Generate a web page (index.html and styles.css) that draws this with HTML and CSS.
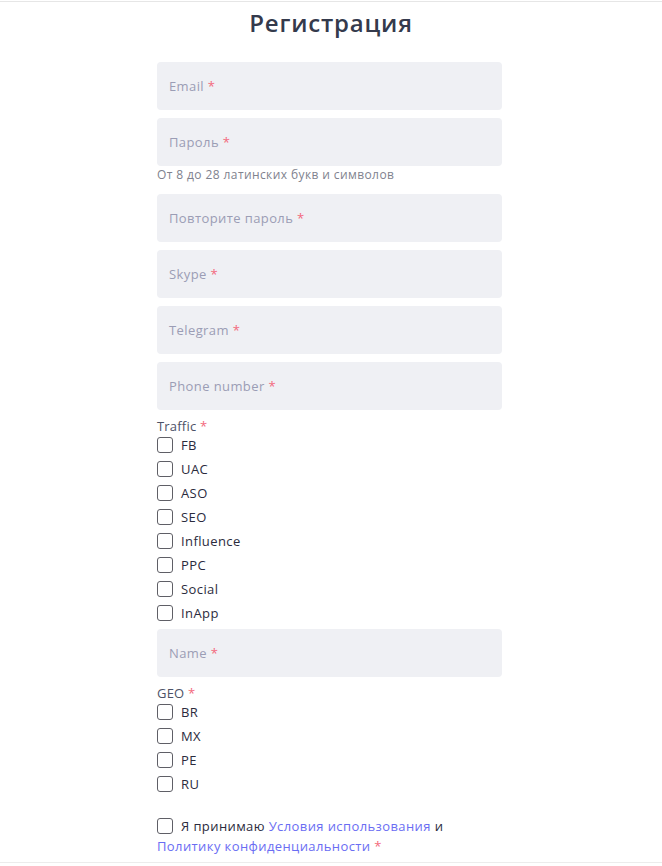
FILE: index.html
```html
<!DOCTYPE html>
<html lang="ru">
<head>
<meta charset="utf-8">
<title>Регистрация</title>
<link rel="stylesheet" href="styles.css">
</head>
<body>
<div class="page">
  <h1 class="title">Регистрация</h1>
  <form class="form">
    <div class="field"><span class="ph">Email <span class="req">*</span></span></div>
    <div class="field"><span class="ph">Пароль <span class="req">*</span></span></div>
    <div class="hint">От 8 до 28 латинских букв и символов</div>
    <div class="field mt"><span class="ph">Повторите пароль <span class="req">*</span></span></div>
    <div class="field"><span class="ph">Skype <span class="req">*</span></span></div>
    <div class="field"><span class="ph">Telegram <span class="req">*</span></span></div>
    <div class="field"><span class="ph">Phone number <span class="req">*</span></span></div>
    <div class="group">
      <div class="glabel">Traffic <span class="req">*</span></div>
      <label class="check"><span class="box"></span>FB</label>
      <label class="check"><span class="box"></span>UAC</label>
      <label class="check"><span class="box"></span>ASO</label>
      <label class="check"><span class="box"></span>SEO</label>
      <label class="check"><span class="box"></span>Influence</label>
      <label class="check"><span class="box"></span>PPC</label>
      <label class="check"><span class="box"></span>Social</label>
      <label class="check"><span class="box"></span>InApp</label>
    </div>
    <div class="field"><span class="ph">Name <span class="req">*</span></span></div>
    <div class="group">
      <div class="glabel">GEO <span class="req">*</span></div>
      <label class="check"><span class="box"></span>BR</label>
      <label class="check"><span class="box"></span>MX</label>
      <label class="check"><span class="box"></span>PE</label>
      <label class="check"><span class="box"></span>RU</label>
    </div>
    <div class="agree">
      <span class="box"></span>Я принимаю <a class="link">Условия использования</a> и<br>
      <a class="link">Политику конфиденциальности</a> <span class="req">*</span>
    </div>
  </form>
</div>
</body>
</html>
```
FILE: styles.css
```css
html, body {
  margin: 0;
  padding: 0;
  background: #fff;
}
body {
  font-family: "Open Sans", "Noto Sans", sans-serif;
  color: #2b2b3d;
}
.page {
  margin-top: 1px;
  border-top: 1px solid #e6e6e6;
  border-bottom: 1px solid #ececec;
  height: 862px;
  box-sizing: border-box;
}
.title {
  margin: 0;
  padding-top: 5px;
  height: 60px;
  box-sizing: border-box;
  text-align: center;
  font-size: 24px;
  font-weight: 600;
  line-height: 32px;
  color: #343a4c;
  letter-spacing: 0.8px;
}
.form {
  margin-left: 157px;
  width: 345px;
  display: flex;
  flex-direction: column;
}
.field {
  height: 48px;
  border-radius: 4px;
  background: #eff0f4;
  display: flex;
  align-items: center;
  padding-left: 12px;
  margin-bottom: 8px;
}
.ph {
  font-size: 13px;
  color: #9b9db5;
  letter-spacing: 0.4px;
}
.req {
  color: #f3697c;
}
.hint {
  margin-top: -7px;
  font-size: 12px;
  line-height: 16px;
  color: #80828e;
  letter-spacing: 0.4px;
}
.field.mt {
  margin-top: 11px;
}
.group {
  display: flex;
  flex-direction: column;
  margin-bottom: 4px;
}
.glabel {
  font-size: 13px;
  line-height: 16px;
  color: #4d5267;
  margin-bottom: -1px;
  letter-spacing: 0.2px;
}
.check {
  display: flex;
  align-items: center;
  height: 24px;
  font-size: 13px;
  letter-spacing: 0.4px;
}
.box {
  width: 14px;
  height: 14px;
  border: 1px solid #5f5f66;
  border-radius: 3px;
  margin-right: 8px;
  flex: none;
}
.agree {
  margin-top: 16px;
  font-size: 13px;
  line-height: 20px;
  letter-spacing: 0.4px;
}
.agree .box {
  display: inline-block;
  vertical-align: -3px;
}
.link {
  color: #6a6df3;
}
```
